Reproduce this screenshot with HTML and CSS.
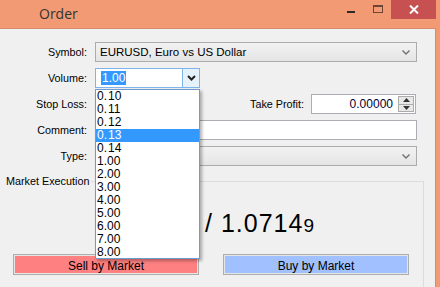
FILE: index.html
```html
<!DOCTYPE html>
<html lang="en">
<head>
    <meta charset="UTF-8">
    <meta name="viewport" content="width=device-width, initial-scale=1.0">
    <title>Order</title>
    <link rel="stylesheet" href="styles.css">
</head>
<body>
    <div class="window">
        <div class="titlebar">
            <span class="title">Order</span>
            <div class="controls">
                <span class="ctl-min"></span>
                <span class="ctl-max"></span>
                <span class="ctl-close">
                    <svg width="10" height="9" viewBox="0 0 10 9">
                        <path d="M1 0.5 L9 8.5 M9 0.5 L1 8.5" stroke="#fff" stroke-width="2"/>
                    </svg>
                </span>
            </div>
        </div>

        <div class="client">
            <!-- order fields -->
            <div class="row">
                <label class="lbl">Symbol:</label>
                <div class="combo combo-wide">
                    <span>EURUSD, Euro vs US Dollar</span>
                    <svg class="chev" width="8" height="5" viewBox="0 0 8 5"><path d="M0.5 0.5 L4 4 L7.5 0.5" stroke="#707070" stroke-width="1.4" fill="none"/></svg>
                </div>
            </div>

            <div class="row">
                <label class="lbl">Volume:</label>
                <div class="combo-edit">
                    <span class="sel">1.00</span>
                    <span class="drop-btn">
                        <svg width="9" height="6" viewBox="0 0 9 6"><path d="M1 1 L4.5 4.5 L8 1" stroke="#222" stroke-width="2" fill="none"/></svg>
                    </span>
                </div>
            </div>

            <div class="row">
                <label class="lbl">Stop Loss:</label>
                <div class="field field-small"></div>
                <label class="lbl-tp">Take Profit:</label>
                <div class="field field-small spin-field">
                    <span class="num">0.00000</span>
                    <span class="spinner">
                        <span class="spin-up"><svg width="7" height="4" viewBox="0 0 7 4"><path d="M0 4 L3.5 0 L7 4Z" fill="#333"/></svg></span>
                        <span class="spin-down"><svg width="7" height="4" viewBox="0 0 7 4"><path d="M0 0 L3.5 4 L7 0Z" fill="#333"/></svg></span>
                    </span>
                </div>
            </div>

            <div class="row">
                <label class="lbl">Comment:</label>
                <div class="field field-wide"></div>
            </div>

            <div class="row row-type">
                <label class="lbl">Type:</label>
                <div class="combo combo-wide">
                    <svg class="chev" width="8" height="5" viewBox="0 0 8 5"><path d="M0.5 0.5 L4 4 L7.5 0.5" stroke="#707070" stroke-width="1.4" fill="none"/></svg>
                </div>
            </div>

            <fieldset class="group">
                <legend>Market Execution</legend>
                <div class="price">/ 1.0714<span class="pip">9</span></div>
                <div class="buttons">
                    <button class="btn btn-sell">Sell by Market</button>
                    <button class="btn btn-buy">Buy by Market</button>
                </div>
            </fieldset>

            <!-- open volume list -->
            <ul class="droplist">
                <li>0.&#8202;10</li>
                <li>0.&#8202;11</li>
                <li>0.&#8202;12</li>
                <li class="hot">0.&#8202;13</li>
                <li>0.&#8202;14</li>
                <li>1.00</li>
                <li>2.00</li>
                <li>3.00</li>
                <li>4.00</li>
                <li>5.00</li>
                <li>6.00</li>
                <li>7.00</li>
                <li>8.00</li>
            </ul>
        </div>
    </div>
</body>
</html>
```

FILE: styles.css
```css
body {
    margin: 0;
    padding: 0;
    background: #f19a74;
    font-family: "Liberation Sans", Arial, sans-serif;
    font-size: 10.8px;
    color: #000;
    overflow: hidden;
}

.window {
    width: 440px;
    height: 287px;
    display: flex;
    flex-direction: column;
}

.titlebar {
    height: 28px;
    display: flex;
    align-items: flex-start;
    flex-shrink: 0;
}

.title {
    font-family: "Open Sans", "Noto Sans", sans-serif;
    font-size: 14px;
    color: #333;
    padding-left: 39px;
    margin-top: 4px;
}

.controls {
    margin-left: auto;
    margin-right: 4px;
    display: flex;
    align-items: flex-start;
}

.ctl-min {
    width: 8px;
    height: 2px;
    background: #2a2a2a;
    margin-top: 11px;
    margin-right: 18px;
}

.ctl-max {
    width: 8px;
    height: 5px;
    border: 1px solid #6b4535;
    border-top-width: 2px;
    margin-top: 5px;
    margin-right: 8px;
}

.ctl-close {
    width: 45px;
    height: 19px;
    background: #c75050;
    display: flex;
    align-items: center;
    justify-content: center;
}

.client {
    position: relative;
    flex: 1;
    width: 435px;
    background: #f0f0f0;
    border-top: 1px solid #d88a6c;
    border-right: 1px solid #d88a6c;
    padding-top: 13px;
}

.row {
    display: flex;
    align-items: center;
    height: 20px;
    margin-bottom: 6px;
}

.row-type {
    margin-top: 1px;
}

.lbl {
    width: 87px;
    text-align: right;
    padding-right: 8px;
    color: #000;
}

.lbl-tp {
    width: 104px;
    text-align: right;
    padding-right: 7px;
}

.combo {
    height: 18px;
    border: 1px solid #acacac;
    background: linear-gradient(to bottom, #f2f2f2, #e5e5e5);
    display: flex;
    align-items: center;
    padding-left: 4px;
    box-sizing: content-box;
    font-size: 11.5px;
}

.combo-wide {
    width: 316px;
}

.chev {
    margin-left: auto;
    margin-right: 6px;
}

.combo-edit {
    width: 103px;
    height: 18px;
    border: 1px solid #7eb4ea;
    background: #fff;
    display: flex;
    align-items: center;
}

.sel {
    background: #3399ff;
    color: #fff;
    margin-left: 5px;
    padding: 0 1px;
    line-height: 14px;
    font-size: 12px;
}

.drop-btn {
    margin-left: auto;
    width: 16px;
    height: 18px;
    border-left: 1px solid #7eb4ea;
    background: #e5f1fb;
    display: flex;
    align-items: center;
    justify-content: center;
}

.field {
    height: 18px;
    border: 1px solid #abadb3;
    background: #fff;
    display: flex;
    align-items: center;
}

.field-small {
    width: 103px;
    justify-content: flex-end;
}

.field-wide {
    width: 320px;
}

.num {
    color: #000033;
    margin-right: 5px;
    font-size: 12px;
}

.spinner {
    width: 16px;
    height: 16px;
    margin-right: 1px;
    border: 1px solid #acacac;
    background: #e8e8e8;
    display: flex;
    flex-direction: column;
    box-sizing: border-box;
}

.spin-up,
.spin-down {
    flex: 1;
    display: flex;
    align-items: center;
    justify-content: center;
}

.spin-up {
    border-bottom: 1px solid #acacac;
}

.group {
    margin: 9px 11px 0 5px;
    padding: 0;
    border: none;
    border-top: 1px solid #dcdcdc;
    border-right: 1px solid #dcdcdc;
    height: 120px;
}

.group legend {
    padding: 0 2px 0 1px;
    margin-left: 0;
    color: #000;
}

.price {
    font-size: 25px;
    letter-spacing: 1px;
    text-align: right;
    padding-right: 109px;
    margin-top: 21px;
    line-height: 30px;
    white-space: nowrap;
}

.pip {
    font-size: 19px;
    letter-spacing: 0;
}

.buttons {
    display: flex;
    gap: 24px;
    margin-top: 13px;
    padding-left: 8px;
}

.btn {
    width: 186px;
    height: 21px;
    border: 1px solid #adadad;
    font-family: "Liberation Sans", Arial, sans-serif;
    font-size: 12px;
    line-height: 13px;
    color: #000;
    padding: 3px 0 0;
    box-shadow: inset 0 0 0 1px #e6e6e6;
}

.btn-sell {
    background: #ff8080;
}

.btn-buy {
    background: #a0c0ff;
}

.droplist {
    position: absolute;
    left: 95px;
    top: 60px;
    width: 103px;
    height: 168px;
    margin: 0;
    padding: 0;
    list-style: none;
    background: #fff;
    border: 1px solid #6f9bd3;
    box-shadow: 2px 2px 3px rgba(0, 0, 0, 0.3);
    font-size: 12px;
}

.droplist li {
    height: 13px;
    line-height: 13px;
    padding-left: 1px;
    color: #000;
}

.droplist li.hot {
    background: #3399ff;
    color: #fff;
}
```
